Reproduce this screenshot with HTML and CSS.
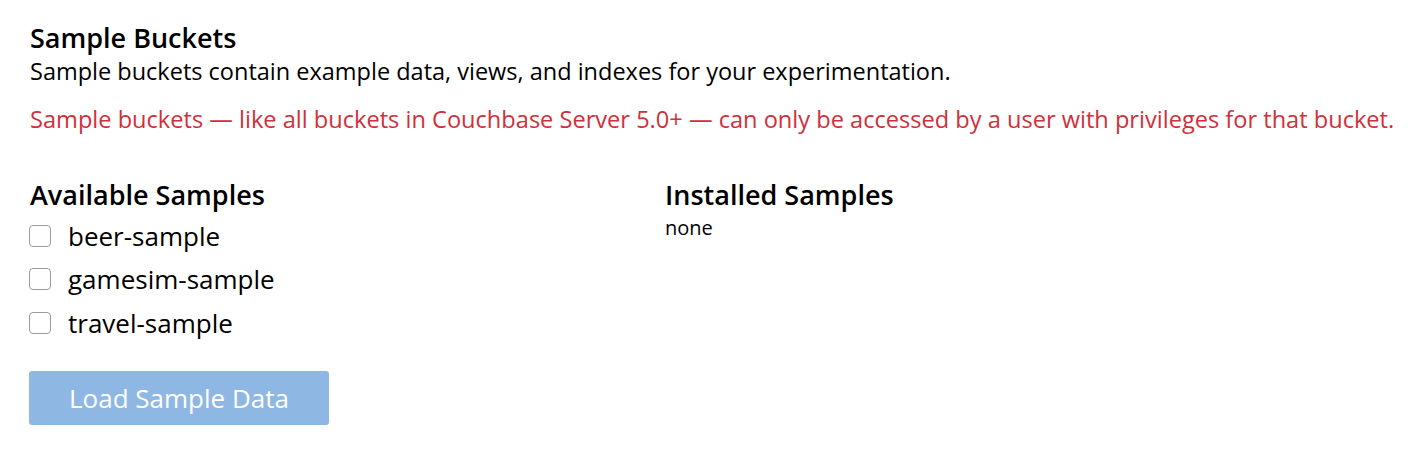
FILE: index.html
```html
<!DOCTYPE html>
<html>
<head>
<meta charset="utf-8">
<link rel="stylesheet" href="styles.css">
</head>
<body>
<div class="page">
  <h2 class="title">Sample Buckets</h2>
  <p class="desc">Sample buckets contain example data, views, and indexes for your experimentation.</p>
  <p class="warn">Sample buckets — like all buckets in Couchbase Server 5.0+ — can only be accessed by a user with privileges for that bucket.</p>
  <div class="cols">
    <div class="col">
      <h3 class="sub">Available Samples</h3>
      <label class="opt"><span class="box"></span>beer-sample</label>
      <label class="opt"><span class="box"></span>gamesim-sample</label>
      <label class="opt"><span class="box"></span>travel-sample</label>
      <button class="btn" disabled>Load Sample Data</button>
    </div>
    <div class="col">
      <h3 class="sub">Installed Samples</h3>
      <div class="none">none</div>
    </div>
  </div>
</div>
</body>
</html>
```
FILE: styles.css
```css
html, body { margin: 0; padding: 0; background: #fff; }
body { font-family: "Open Sans", sans-serif; color: #000; }
.page { padding: 20px 10px 18px 30px; }
.title { font-size: 27px; font-weight: 600; margin: 0; line-height: 35px; }
.desc { font-size: 23.5px; margin: 0; line-height: 32px; }
.warn { font-size: 23.6px; margin: 16px 0 0; line-height: 32px; color: #d1303a; white-space: nowrap; }
.cols { display: flex; margin-top: 42px; }
.col { width: 635px; display: flex; flex-direction: column; align-items: flex-start; }
.sub { font-size: 27px; font-weight: 600; margin: 0 0 1px; line-height: 36px; }
.opt { display: flex; align-items: center; font-size: 26px; height: 43.5px; }
.box { width: 22px; height: 22px; border: 1.5px solid #9b9b9b; border-radius: 4px; margin: 0 17px 0 -1px; box-sizing: border-box; }
.btn { margin: 26.5px 0 0 -1px; width: 300px; height: 54px; background: #8fb7e4; border: none; border-radius: 3px; color: #fff; font-family: "Open Sans", sans-serif; font-size: 26px; padding: 0; }
.none { font-size: 20px; line-height: 24px; margin-top: 2px; }
```
